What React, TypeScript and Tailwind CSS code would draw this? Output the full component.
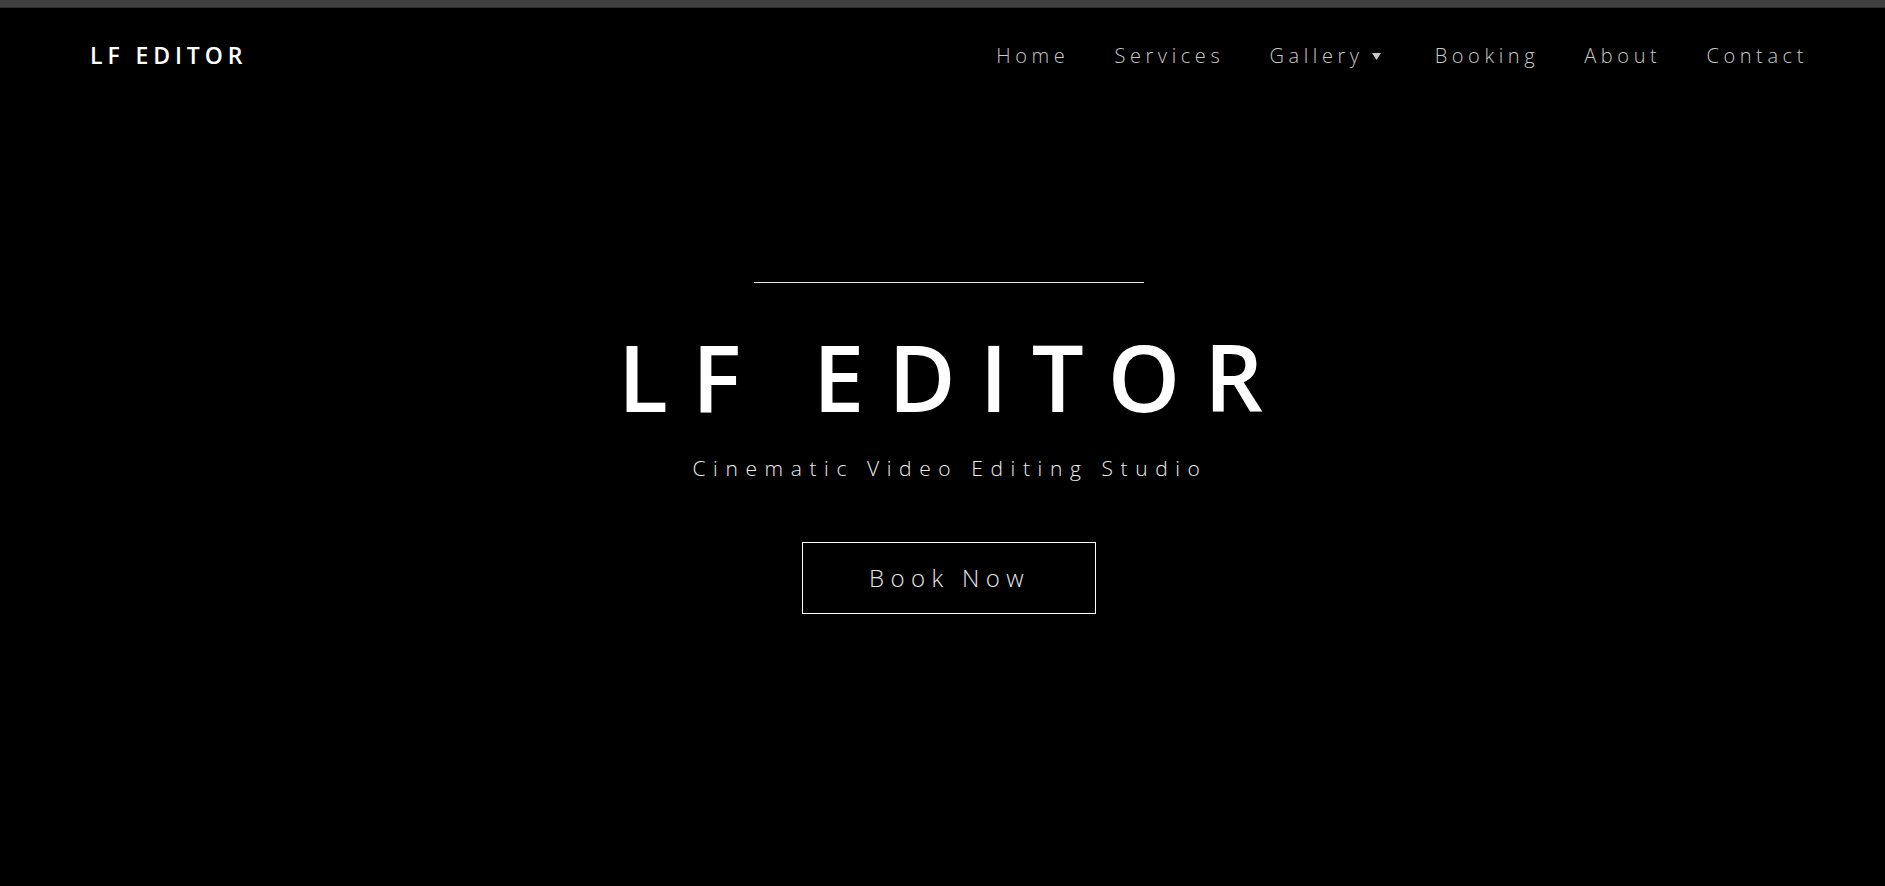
import React from "react";

const navItems = ["Home", "Services", "Gallery", "Booking", "About", "Contact"];

export default function App() {
  return (
    <div
      className="min-h-[886px] w-full bg-black text-white flex flex-col"
      style={{ fontFamily: '"Open Sans", "DejaVu Sans", sans-serif' }}
    >
      <div className="h-[8px] w-full bg-[#404040] border-b border-[#2e2e2e]" />
      <header className="h-[94px] flex items-center justify-between pl-[90px] pr-[77px]">
        <div className="text-[23px] font-semibold tracking-[4.9px] text-white leading-none">
          LF EDITOR
        </div>
        <nav className="flex items-center gap-[45px] pt-[2px]">
          {navItems.map((item) => (
            <a
              key={item}
              href="#"
              className="flex items-center text-[20px] font-light tracking-[4.6px] text-[#c8c8c8] leading-none"
            >
              {item}
              {item === "Gallery" && (
                <svg width="9" height="7" viewBox="0 0 9 7" className="ml-[8px] mr-[9px]">
                  <path d="M0 0 H9 L4.5 7 Z" fill="#c8c8c8" />
                </svg>
              )}
            </a>
          ))}
        </nav>
      </header>
      <main className="flex flex-col items-center pl-[12px]">
        <div className="mt-[180px] h-px w-[390px] bg-[#e8e8e8]" />
        <h1 className="mt-[48px] text-[92px] font-semibold leading-none tracking-[24px] pl-[8px] text-white">
          LF EDITOR
        </h1>
        <p className="mt-[30px] text-[21px] font-light leading-[1.5] tracking-[7.6px] pl-[3px] text-[#ececec]">
          Cinematic Video Editing Studio
        </p>
        <button className="mt-[57px] w-[294px] h-[72px] border border-white flex items-center justify-center text-[24px] font-light tracking-[6.4px] pl-[2px] text-[#e6e6e6]">
          Book Now
        </button>
      </main>
    </div>
  );
}
